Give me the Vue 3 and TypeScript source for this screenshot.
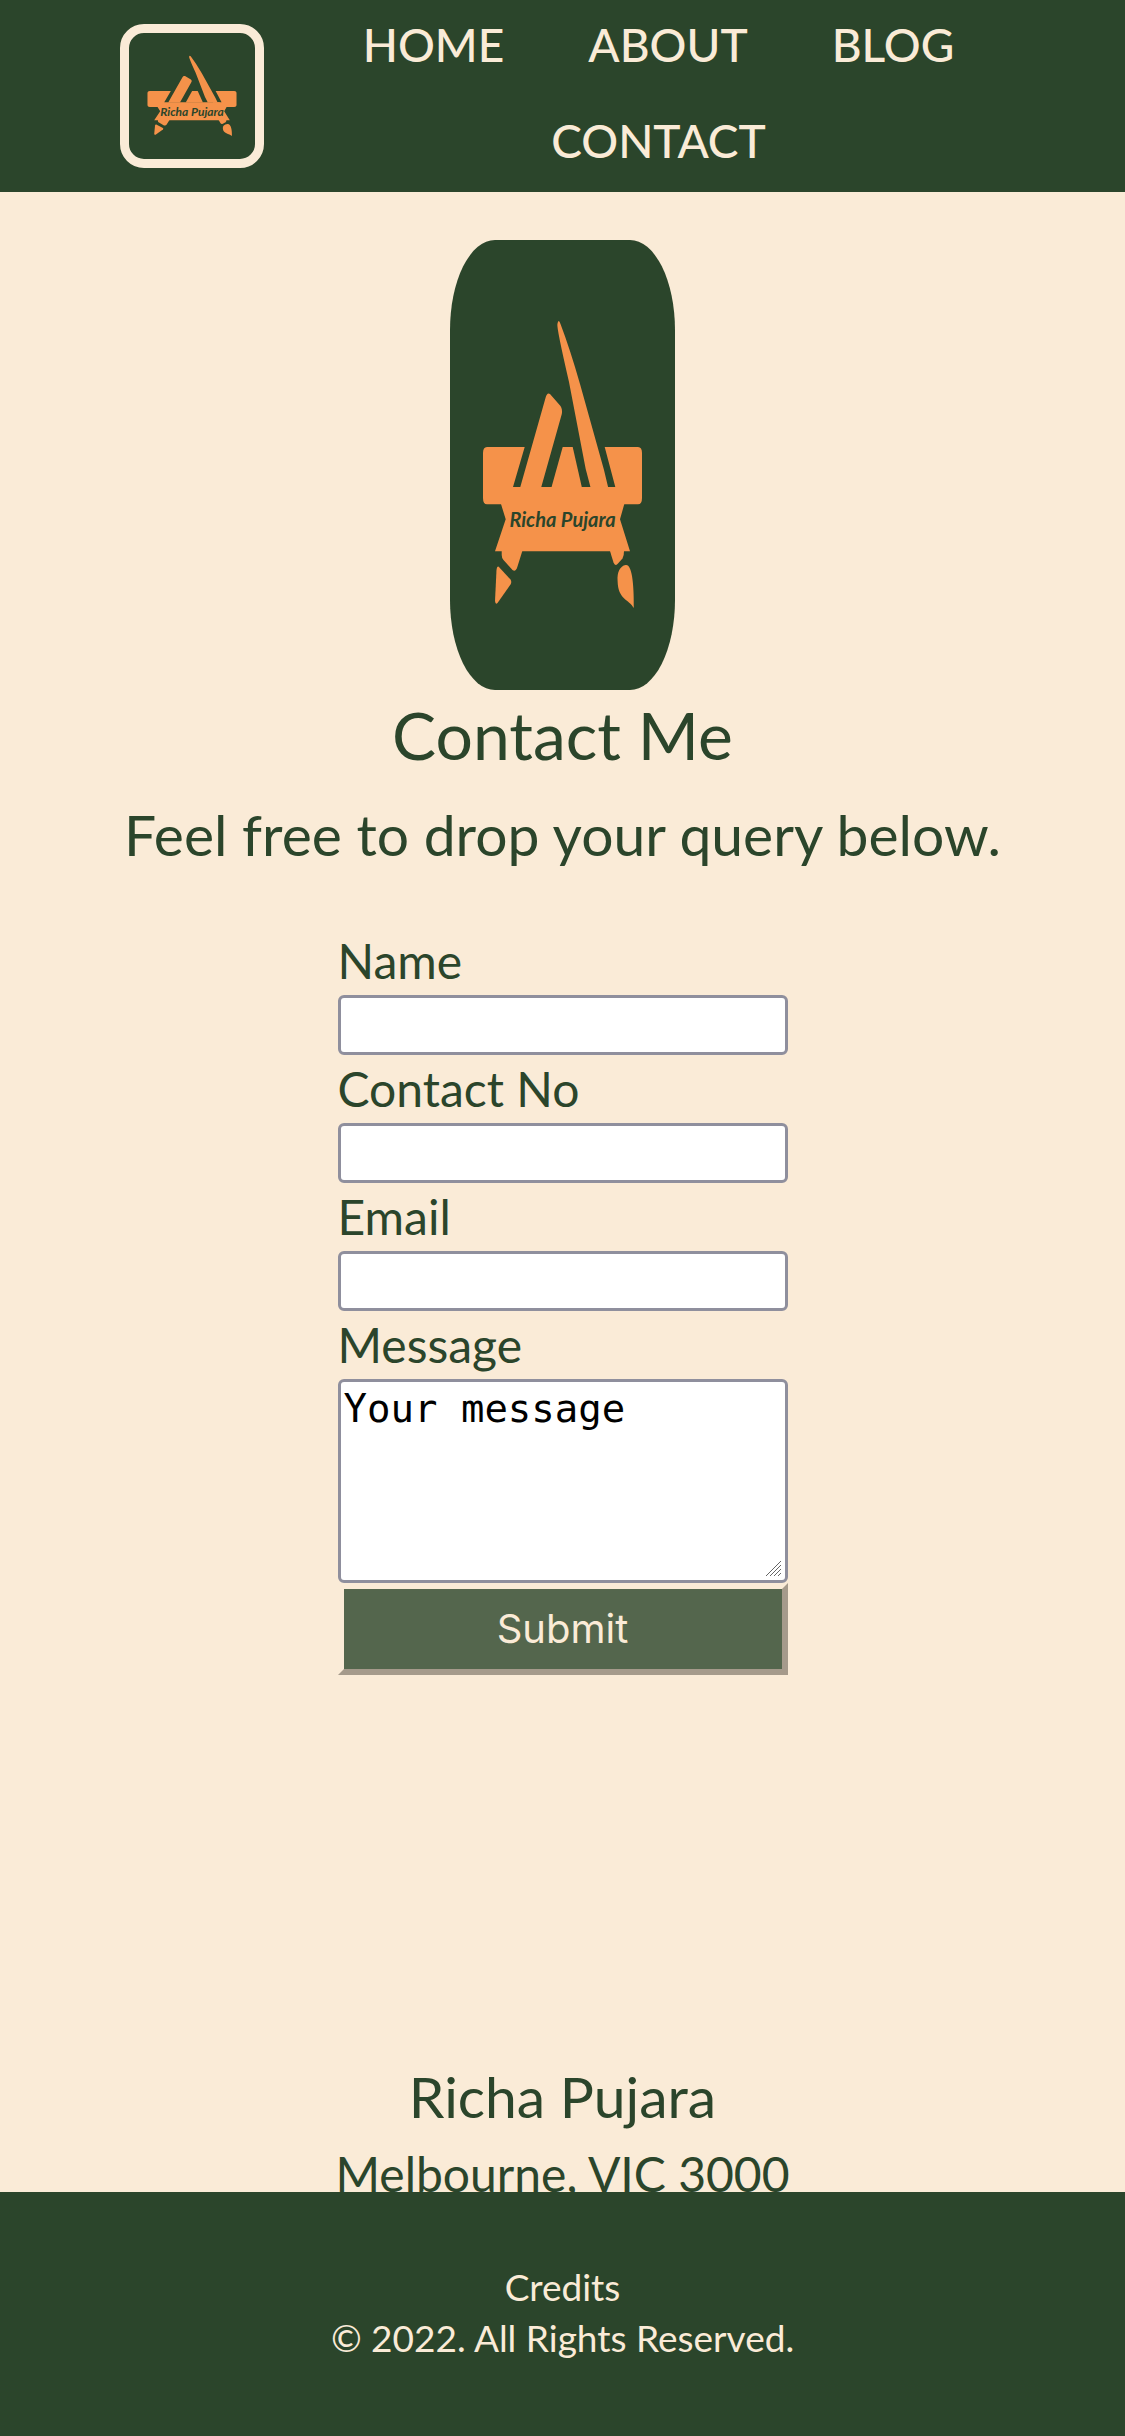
<script setup lang="ts">
import { ref } from 'vue'

interface Field {
  id: string
  label: string
  type: string
}

const links: string[] = ['HOME', 'ABOUT', 'BLOG', 'CONTACT']

const fields: Field[] = [
  { id: 'name', label: 'Name', type: 'text' },
  { id: 'phone', label: 'Contact No', type: 'tel' },
  { id: 'email', label: 'Email', type: 'email' },
]

const values = ref<Record<string, string>>({ name: '', phone: '', email: '' })
const message = ref('Your message')

// Crossed pencil and brush over a drawing board; stretches with its box.
const logoShapes: string[] = [
  'M37 207H74.7L63 247H162V264.3H37Q33 264.3 33 258V213Q33 207 37 207Z',
  'M154.7 207H188Q192 207 192 213V258Q192 264.3 188 264.3H150V247H165.3Z',
  'M70 248L95.5 158Q97 152 100 154L110.5 166Q112.6 169 111.8 174L91 248Z',
  'M101.3 248L112.7 207H122.7L132 248Z',
  'M140.7 248L135.7 229L119 142Q106.5 88 107.4 84Q108.5 78 110.5 84Q120 109 130 144L154 230L158.3 248Z',
  'M51 264H174.3L170 279.3L180 311.3H45L55.7 279.3Z',
  'M51.7 311V315Q51.7 318 53.5 320L62.5 330Q65.5 332.5 67.3 327L72.3 311Z',
  'M160 311L163.5 322.5Q165 326.5 167.5 324L172.5 318.5Q174 316 174 311Z',
  'M48.7 326.7L60.5 339.5Q62 342 60.5 344.5L47.5 363Q45.5 365 45 361L46.5 330Q47 326 48.7 326.7Z',
  'M175.7 325C170 326 167 332 167.6 341C168 360 179 359 183.8 368C184 350 183 324 175.7 325Z',
]
</script>

<template>
  <div class="page">
    <header class="site-header">
      <a class="brand" href="#" aria-label="Richa Pujara home">
        <svg class="art" viewBox="0 0 225 450" preserveAspectRatio="none" aria-hidden="true">
          <path v-for="d in logoShapes" :key="d" :d="d" />
        </svg>
        <span class="brand-name">Richa Pujara</span>
      </a>
      <nav class="nav">
        <a v-for="link in links" :key="link" href="#">{{ link }}</a>
      </nav>
    </header>

    <main class="content">
      <div class="hero">
        <svg class="art" viewBox="0 0 225 450" preserveAspectRatio="none" aria-hidden="true">
          <path v-for="d in logoShapes" :key="d" :d="d" />
        </svg>
        <span class="hero-name">Richa Pujara</span>
      </div>
      <h1>Contact Me</h1>
      <h2>Feel free to drop your query below.</h2>

      <form class="form" @submit.prevent>
        <template v-for="field in fields" :key="field.id">
          <label :for="field.id">{{ field.label }}</label>
          <input :id="field.id" v-model="values[field.id]" :type="field.type" />
        </template>
        <label for="message">Message</label>
        <div class="message">
          <textarea id="message" v-model="message"></textarea>
          <svg class="grip" viewBox="0 0 15 15" aria-hidden="true">
            <path d="M0 15L15 0M4 15L15 4M8 15L15 8M12 15L15 12" />
          </svg>
        </div>
        <button type="submit">Submit</button>
      </form>
    </main>

    <address class="contact">
      <h3>Richa Pujara</h3>
      <p>Melbourne, VIC 3000</p>
    </address>

    <footer class="site-footer">
      <a href="#">Credits</a>
      <p>© 2022. All Rights Reserved.</p>
    </footer>
  </div>
</template>

<style>
body {
  margin: 0;
  background: #faebd7;
}
</style>

<style scoped>
.page {
  display: flex;
  flex-direction: column;
  min-height: 100vh;
  color: #2b452b;
  background: #faebd7;
  font-family: Lato, sans-serif;
}

h1,
h2,
h3,
p {
  margin: 0;
  font-weight: 400;
}

a {
  color: inherit;
  text-decoration: none;
}

.site-header {
  display: flex;
  align-items: center;
  gap: 48px;
  padding: 0 120px;
  height: 192px;
  box-sizing: border-box;
  color: #faebd7;
  background: #2b452b;
}

.brand {
  position: relative;
  flex: none;
  width: 126px;
  height: 126px;
  border: 9px solid #faebd7;
  border-radius: 24px;
}

.art {
  display: block;
  width: 100%;
  height: 100%;
  fill: #f5924a;
}

.brand-name,
.hero-name {
  position: absolute;
  left: 0;
  right: 0;
  text-align: center;
  color: #2b452b;
  white-space: nowrap;
}

.brand-name {
  top: 71px;
  font: italic 700 12px/16px Lato, sans-serif;
}

.hero-name {
  top: 263px;
  font: italic 700 20px/32px Lato, sans-serif;
}

.nav {
  display: flex;
  flex: 1;
  flex-wrap: wrap;
  justify-content: center;
  column-gap: 84px;
  padding-bottom: 6px;
  font-size: 46px;
  line-height: 96px;
  font-weight: 500;
}

.content {
  display: flex;
  flex-direction: column;
  align-items: center;
  padding-top: 48px;
}

.hero {
  position: relative;
  width: 225px;
  height: 450px;
  border-radius: 20%;
  background: #2b452b;
}

h1 {
  margin-bottom: 6px;
  font-size: 66px;
  line-height: 90px;
  text-align: center;
}

h2 {
  font-size: 57px;
  line-height: 96px;
  text-align: center;
}

.form {
  display: flex;
  flex-direction: column;
  width: 40%;
  margin-top: 45px;
}

label {
  font-size: 48px;
  line-height: 68px;
}

input,
textarea {
  display: block;
  box-sizing: border-box;
  width: 100%;
  border: 3px solid #8f8f9d;
  border-radius: 6px;
  background: #fff;
  color: #000;
  font: 39px/48px "DejaVu Sans Mono", monospace;
}

input {
  height: 60px;
  padding: 3px;
}

textarea {
  height: 204px;
  padding: 3px;
  resize: none;
}

.message {
  position: relative;
}

.grip {
  position: absolute;
  right: 7px;
  bottom: 7px;
  width: 15px;
  height: 15px;
  fill: none;
  stroke: #666;
}

button {
  height: 92px;
  padding: 0;
  border: 6px solid;
  border-color: #faebd7 #918779 #918779 #faebd7;
  color: #faebd7;
  background: #2b452b;
  font: 40px/48px Inter, sans-serif;
  opacity: 0.8;
}

.contact {
  margin-top: auto;
  text-align: center;
  font-style: normal;
}

h3 {
  font-size: 57px;
  line-height: 84px;
}

.contact p {
  height: 54px;
  font-size: 48px;
  line-height: 72px;
}

.site-footer {
  position: relative;
  display: flex;
  flex-direction: column;
  align-items: center;
  justify-content: center;
  height: 244px;
  padding-bottom: 4px;
  box-sizing: border-box;
  color: #faebd7;
  background: #2b452b;
  font-size: 37px;
  line-height: 51px;
}
</style>
